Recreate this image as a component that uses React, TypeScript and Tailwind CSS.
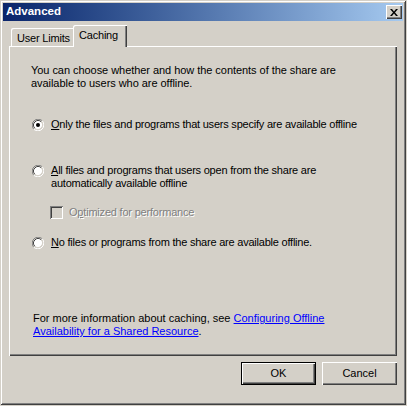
const font = "font-['Tahoma','Liberation_Sans',Arial,sans-serif]";

function Radio({ checked }: { checked?: boolean }) {
  return (
    <svg width="12" height="12" viewBox="0 0 12 12" className="shrink-0">
      <path d="M10.24 1.76 A6 6 0 0 0 1.76 10.24" stroke="#808080" strokeWidth="1" fill="none" />
      <path d="M1.76 10.24 A6 6 0 0 0 10.24 1.76" stroke="#ffffff" strokeWidth="1" fill="none" />
      <circle cx="6" cy="6" r="4.5" fill="#ffffff" />
      <path d="M9.18 2.82 A4.5 4.5 0 0 0 2.82 9.18" stroke="#404040" strokeWidth="1" fill="none" />
      <path d="M2.82 9.18 A4.5 4.5 0 0 0 9.18 2.82" stroke="#d4d0c8" strokeWidth="1" fill="none" />
      {checked && <circle cx="6" cy="6" r="2" fill="#000000" />}
    </svg>
  );
}

function Check() {
  return (
    <div className="w-[13px] h-[13px] shrink-0 bg-[#d4d0c8] shadow-[inset_1px_1px_#808080,inset_-1px_-1px_#ffffff,inset_2px_2px_#404040,inset_-2px_-2px_#d4d0c8]" />
  );
}

function Button({ label, primary }: { label: string; primary?: boolean }) {
  return (
    <div
      className={`w-[75px] h-[23px] flex items-center justify-center text-[11px] text-black bg-[#d4d0c8] ${
        primary
          ? 'border border-black shadow-[inset_1px_1px_#ffffff,inset_-1px_-1px_#404040,inset_-2px_-2px_#808080]'
          : 'shadow-[inset_1px_1px_#ffffff,inset_-1px_-1px_#404040,inset_-2px_-2px_#808080]'
      }`}
    >
      {label}
    </div>
  );
}

export default function App() {
  return (
    <div className={`w-[407px] h-[406px] bg-[#d4d0c8] ${font}`}>
      <div className="w-[406px] h-[405px] p-[3px] flex flex-col bg-[#d4d0c8] shadow-[inset_1px_1px_#d4d0c8,inset_-1px_-1px_#404040,inset_2px_2px_#ffffff,inset_-2px_-2px_#808080]">
        {/* title bar */}
        <div className="h-[18px] shrink-0 flex items-center justify-between pl-[3px] pr-[1px] bg-gradient-to-r from-[#0a246a] to-[#a6caf0]">
          <span className="text-[11.5px] font-bold text-white leading-none">Advanced</span>
          <div className="w-[16px] h-[14px] flex items-center justify-center bg-[#d4d0c8] shadow-[inset_1px_1px_#ffffff,inset_-1px_-1px_#404040,inset_-2px_-2px_#808080]">
            <svg width="8" height="7" viewBox="0 0 8 7">
              <path d="M0 0h2l2 2.5L6 0h2L5 3.5 8 7H6L4 4.5 2 7H0l3-3.5z" fill="#000" />
            </svg>
          </div>
        </div>

        <div className="px-[6px] pt-[4px] flex flex-col flex-1">
          {/* tabs */}
          <div className="h-[21px] flex items-end pl-[2px]">
            <div className="w-[62px] h-[18px] pl-[6px] pt-[2px] text-[11px] tracking-[-0.2px] text-black bg-[#d4d0c8] rounded-tl-[2px] shadow-[inset_1px_1px_#ffffff]">
              User Limits
            </div>
            <div className="relative z-10 w-[54px] h-[22px] mb-[-1px] pl-[6px] pt-[2px] text-[11px] tracking-[-0.2px] text-black bg-[#d4d0c8] rounded-tl-[2px] shadow-[inset_1px_1px_#ffffff,inset_-1px_0_#404040,inset_-2px_0_#808080]">
              Caching
            </div>
          </div>

          {/* panel */}
          <div className="w-[388px] h-[310px] flex flex-col pl-[22px] text-[11px] leading-[13px] text-black shadow-[inset_1px_1px_#ffffff,inset_-1px_-1px_#404040,inset_-2px_-2px_#808080]">
            <p className="mt-[18px] tracking-[-0.05px]">
              You can choose whether and how the contents of the share are
              <br />
              available to users who are offline.
            </p>

            <div className="mt-[28px] flex items-center gap-[7px] pl-[1px] tracking-[-0.22px]">
              <Radio checked />
              <span>
                <span className="underline">O</span>nly the files and programs that users specify are available offline
              </span>
            </div>

            <div className="mt-[33px] flex gap-[7px] pl-[1px] tracking-[-0.22px]">
              <div className="pt-[1px]">
                <Radio />
              </div>
              <span>
                <span className="underline">A</span>ll files and programs that users open from the share are
                <br />
                automatically available offline
              </span>
            </div>

            <div className="mt-[16px] flex items-center gap-[6px] pl-[19px] tracking-[-0.2px]">
              <Check />
              <span className="text-[#808080] [text-shadow:1px_1px_0_#ffffff]">
                O<span className="underline">p</span>timized for performance
              </span>
            </div>

            <div className="mt-[17px] flex items-center gap-[7px] pl-[1px] tracking-[-0.22px]">
              <Radio />
              <span>
                <span className="underline">N</span>o files or programs from the share are available offline.
              </span>
            </div>

            <p className="mt-[63px] pl-[2px]">
              For more information about caching, see{' '}
              <span className="text-[#0000ff] underline">Configuring Offline</span>
              <br />
              <span className="text-[#0000ff] underline">Availability for a Shared Resource</span>.
            </p>
          </div>

          {/* buttons */}
          <div className="w-[388px] mt-[6px] flex justify-end gap-[6px]">
            <Button label="OK" primary />
            <Button label="Cancel" />
          </div>
        </div>
      </div>
    </div>
  );
}
